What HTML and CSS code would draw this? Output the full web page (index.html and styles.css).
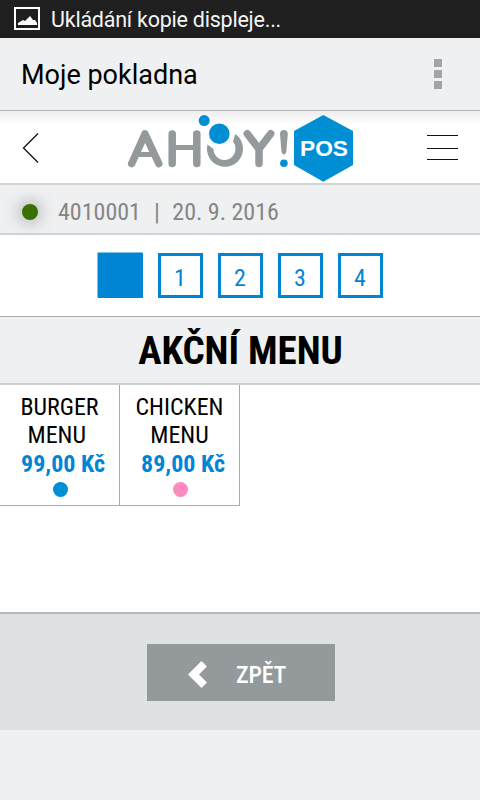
FILE: index.html
```html
<!DOCTYPE html>
<html lang="cs">
<head>
<meta charset="utf-8">
<title>Moje pokladna</title>
<link rel="stylesheet" href="styles.css">
</head>
<body>
<div class="status">
  <svg class="status-icon" width="26" height="23" viewBox="0 0 26 23"><rect x="1" y="1" width="24" height="21" fill="none" stroke="#fff" stroke-width="2"/><path d="M4 18v-2l5-3 2 1 5-5 3 4 2 0 2 3v2z" fill="#fff"/></svg>
  <span class="status-text">Ukládání kopie displeje...</span>
</div>
<div class="appbar">
  <h1 class="app-title">Moje pokladna</h1>
  <div class="overflow"><i></i><i></i><i></i></div>
</div>
<header class="header">
  <svg class="back" width="18" height="32" viewBox="0 0 18 32"><path d="M16 1.500L1.500 16 16 30.500" fill="none" stroke="#111" stroke-width="1.300"/></svg>
  <svg class="logo" width="228" height="72" viewBox="127 111 228 72">
    <g fill="none" stroke="#94999c" stroke-width="7.500" stroke-linecap="round" stroke-linejoin="round">
      <path d="M131.700 163.500L145 134l13.800 29.500"/>
      <path d="M137 154.500h17" stroke-width="5" stroke-linecap="butt"/>
      <path d="M172.200 134v29.500M196.800 134v29.500"/>
      <path d="M172 147.500h25" stroke-width="5" stroke-linecap="butt"/>
      <path d="M247.300 133.700L259 149l11.700-15.300M259 148v15.500"/>
    </g>
    <path d="M207.500 144.500l6 4.500A10.800 10.800 0 0 0 235.400 149q.6-3.500-2.400-7.500l2.300-7.500A18 18 0 1 1 207.500 144.500z" fill="#94999c"/>
    <circle cx="219.300" cy="133.700" r="10.300" fill="#008fd5"/>
    <circle cx="204.200" cy="120.600" r="5.500" fill="#008fd5"/>
    <path d="M280 134a3.900 3.900 0 0 1 7.800 0L286.300 152q-2.400 5-4.800 0z" fill="#94999c"/>
    <circle cx="283.900" cy="163.200" r="3.800" fill="#008fd5"/>
    <path d="M323.300 115L353 131v34l-29.700 16.700L294 165v-34z" fill="#008fd5"/>
    <text class="logo-text" x="300" y="156" textLength="48" lengthAdjust="spacingAndGlyphs">POS</text>
  </svg>
  <svg class="burger" width="31" height="28" viewBox="0 0 31 28"><path d="M0 1.500h31M0 14.500h31M0 25.500h31" stroke="#111" stroke-width="1.200"/></svg>
</header>
<div class="info">
  <span class="led"></span>
  <span class="number">4010001</span><span class="sep">|</span><span class="date">20. 9. 2016</span>
</div>
<nav class="tabs">
  <div class="tab active"></div><div class="tab">1</div><div class="tab">2</div><div class="tab">3</div><div class="tab">4</div>
</nav>
<h2 class="heading"><span>AKČNÍ MENU</span></h2>
<main class="items">
  <div class="item"><div class="name">BURGER<br>MENU&nbsp;</div><div class="price">99,00 Kč</div><span class="dot blue"></span></div>
  <div class="item"><div class="name">CHICKEN<br>MENU</div><div class="price">89,00 Kč</div><span class="dot pink"></span></div>
</main>
<footer class="footer">
  <div class="button">
    <svg width="19" height="27" viewBox="0 0 19 27"><path d="M13.500 0L19 5.500 11 13.500l8 8-5.500 5.500L0 13.500z" fill="#fff"/></svg>
    <span>ZPĚT</span>
  </div>
</footer>
</body>
</html>
```
FILE: styles.css
```css
* { box-sizing: border-box; }
body { margin: 0; height: 800px; overflow: hidden; background: #eff0f2; font-family: "Roboto Condensed", Roboto, sans-serif; color: #000; }
svg { display: block; flex: none; }
.status { height: 38px; background: #1f1f1f; color: #f4f4f4; display: flex; align-items: center; padding-left: 14px; font-family: Roboto, sans-serif; }
.status-icon { margin-top: -2px; }
.status-text { font-size: 21.5px; letter-spacing: -0.23px; margin-left: 11px; white-space: nowrap; }
.appbar { height: 73px; border-bottom: 1px solid #b5b7b9; display: flex; align-items: center; justify-content: space-between; padding: 0 38px 0 21px; font-family: Roboto, sans-serif; }
.app-title { margin: 0; padding-top: 2px; font-size: 27px; font-weight: 400; white-space: nowrap; }
.overflow { display: flex; flex-direction: column; gap: 3px; }
.overflow i { width: 8px; height: 8px; background: #a3a4a5; }
.header { height: 74px; background: linear-gradient(#eeeeef, #fff 14px); border-bottom: 2px solid #d2d4d5; display: flex; align-items: center; padding: 2px 0 0 22px; }
.back { margin-top: -1px; }
.logo { margin: -2px 0 0 87px; }
.logo-text { font: 700 22px "Liberation Sans", sans-serif; fill: #fff; }
.burger { margin-left: 72px; }
.info { height: 50px; border-bottom: 2px solid #d0d2d3; display: flex; align-items: center; padding: 5px 0 0 22px; font-size: 24px; font-stretch: 75%; color: #858585; white-space: nowrap; }
.led { width: 16px; height: 16px; border-radius: 50%; background: #397100; box-shadow: 0 0 14px 5px #c4c5c5; margin-right: 20px; }
.sep { margin: 0 12.5px 0 13px; }
.tabs { height: 82px; background: #fff; border-bottom: 1px solid #aaacad; display: flex; justify-content: center; gap: 15px; padding-top: 18px; }
.tab { width: 45px; height: 45px; border: 3px solid #0085d5; display: flex; align-items: center; justify-content: center; padding-top: 5px; color: #0085d5; font-size: 24px; font-stretch: 75%; }
.active { background: #0085d5; box-shadow: -0.5px -0.5px #0085d5; }
.heading { margin: 0; padding: 2px 0 0 1px; height: 68px; border-bottom: 2px solid #cdcfd1; display: flex; justify-content: center; align-items: center; font-size: 39px; font-stretch: 75%; font-weight: 700; white-space: nowrap; }
.items { height: 229px; background: #fff; border-bottom: 2px solid #b7b9ba; display: flex; align-items: flex-start; }
.item { width: 120px; height: 121px; border-right: 1px solid #aaa; border-bottom: 1px solid #aaa; padding-top: 8px; display: flex; flex-direction: column; align-items: center; text-align: center; font-size: 24px; font-stretch: 75%; line-height: 28px; white-space: nowrap; }
.price { color: #0085d5; font-weight: 700; line-height: 31px; padding-left: 7px; margin-bottom: -2px; }
.dot { width: 15px; height: 15px; border-radius: 50%; margin: 4px 0 0 1px; }
.blue { background: #008fd5; }
.pink { background: #ff8ac0; }
.footer { height: 116px; background: #dee2e5; padding-top: 30px; }
.button { width: 188px; height: 57px; margin: 0 auto; transform: translateX(1px); background: #94999c; color: #fff; display: flex; align-items: center; padding: 4px 0 0 41px; gap: 29px; font-size: 24px; font-weight: 500; font-stretch: 75%; letter-spacing: -0.2px; }
```
